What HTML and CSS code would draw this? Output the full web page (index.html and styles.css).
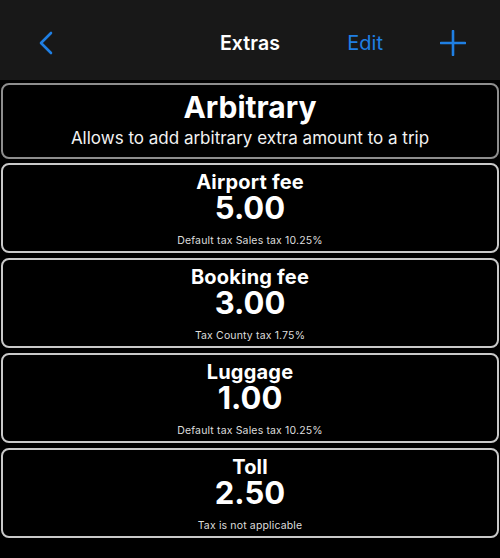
FILE: index.html
```html
<!DOCTYPE html>
<html>
<head>
	<meta charset="utf-8">
	<title>Extras</title>
	<link rel="stylesheet" href="styles.css">
</head>
<body>
<div class="navbar">
	<div class="navLeft">
		<svg class="back" width="16" height="24" viewBox="0 0 16 24"><path d="M13 2 L3 12 L13 22" fill="none" stroke="#1f7fe3" stroke-width="2.6" stroke-linecap="round" stroke-linejoin="round"/></svg>
	</div>
	<div class="navTitle">Extras</div>
	<div class="navRight">
		<span class="edit">Edit</span>
		<svg class="plus" width="26" height="26" viewBox="0 0 26 26"><path d="M13 1 V25 M1 13 H25" fill="none" stroke="#1f7fe3" stroke-width="2.6" stroke-linecap="round"/></svg>
	</div>
</div>
<div class="list">
	<div class="card header">
		<div class="bigTitle">Arbitrary</div>
		<div class="description">Allows to add arbitrary extra amount to a trip</div>
	</div>
	<div class="card">
		<div class="name">Airport fee</div>
		<div class="amount">5.00</div>
		<div class="tax">Default tax Sales tax 10.25%</div>
	</div>
	<div class="card">
		<div class="name">Booking fee</div>
		<div class="amount">3.00</div>
		<div class="tax">Tax County tax 1.75%</div>
	</div>
	<div class="card">
		<div class="name">Luggage</div>
		<div class="amount">1.00</div>
		<div class="tax">Default tax Sales tax 10.25%</div>
	</div>
	<div class="card">
		<div class="name">Toll</div>
		<div class="amount">2.50</div>
		<div class="tax">Tax is not applicable</div>
	</div>
</div>
</body>
</html>
```

FILE: styles.css
```css
body {
	margin: 0;
	background: #000;
	color: #fff;
	font-family: Inter, "Noto Sans", sans-serif;
	height: 558px;
	overflow: hidden;
}

.navbar {
	height: 80px;
	box-sizing: border-box;
	padding-top: 6px;
	background: #181818;
	display: grid;
	grid-template-columns: 1fr auto 1fr;
	align-items: center;
}

.navLeft {
	padding-left: 38px;
	display: flex;
	align-items: center;
}

.navTitle {
	font-size: 19.5px;
	font-weight: 600;
	letter-spacing: 0.1px;
}

.navRight {
	display: flex;
	justify-content: flex-end;
	align-items: center;
	gap: 57px;
	padding-right: 34px;
}

.edit {
	color: #1f7fe3;
	font-size: 20px;
}

.list {
	padding: 3px 1px 0 1px;
	display: flex;
	flex-direction: column;
	gap: 5px;
}

.card {
	border: 2px solid #c9c9c9;
	border-radius: 8px;
	text-align: center;
	height: 90px;
	box-sizing: border-box;
	padding-top: 6px;
}

.card.header {
	border-color: #8e8e8e;
	height: 76px;
	padding-top: 5px;
	margin-bottom: -1px;
}

.bigTitle {
	font-size: 30px;
	font-weight: 700;
	line-height: 34px;
}

.description {
	font-size: 17px;
	line-height: 20px;
	margin-top: 4px;
	color: #f2f2f2;
}

.name {
	font-size: 20px;
	font-weight: 700;
	line-height: 22px;
	letter-spacing: 0.2px;
}

.amount {
	font-size: 31px;
	font-weight: 700;
	line-height: 30px;
}

.tax {
	font-size: 10.5px;
	line-height: 14px;
	margin-top: 11px;
	color: #ddd;
	letter-spacing: 0.15px;
}
```
